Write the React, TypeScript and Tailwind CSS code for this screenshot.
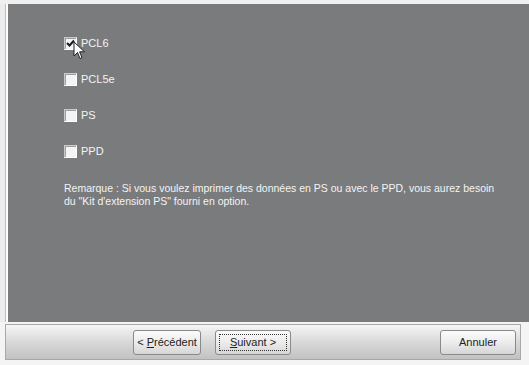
import React from "react";

function Checkbox({ checked }: { checked?: boolean }) {
  return (
    <div className="w-[13px] h-[13px] bg-[#f4f4f4] border border-t-[#c9c9c9] border-l-[#c9c9c9] border-b-white border-r-white shadow-[inset_1px_1px_0_#a0a0a0] flex items-center justify-center">
      {checked && (
        <svg width="9" height="9" viewBox="0 0 9 9">
          <path d="M1 4 L3.5 6.5 L8 1.5" stroke="#1a1a1a" strokeWidth="2" fill="none" />
        </svg>
      )}
    </div>
  );
}

function Option({ label, checked, cursor }: { label: string; checked?: boolean; cursor?: boolean }) {
  return (
    <div className="relative flex items-center gap-[4px] h-[14px]">
      <Checkbox checked={checked} />
      <span className="text-[11px] text-[#f4f4f4] leading-none">{label}</span>
      {cursor && (
        <svg className="absolute left-[9px] top-[5px]" width="13" height="20" viewBox="0 0 13 20">
          <path d="M1 1 L1 15 L4.5 11.5 L7 17.5 L9 16.6 L6.6 10.8 L11.5 10.8 Z" fill="#ffffff" stroke="#222" strokeWidth="1" strokeLinejoin="miter" />
        </svg>
      )}
    </div>
  );
}

function Btn({ children, focus, className = "" }: { children: React.ReactNode; focus?: boolean; className?: string }) {
  return (
    <div className={`h-[25px] rounded-[3px] border border-[#8a8a8a] bg-gradient-to-b from-[#fbfbfb] via-[#ececec] to-[#d6d6d6] flex items-center justify-center text-[11px] text-[#222] ${className}`}>
      {focus ? (
        <span className="border border-dotted border-[#333] px-[10px] py-[1px] leading-[13px]">{children}</span>
      ) : (
        <span className="leading-[13px]">{children}</span>
      )}
    </div>
  );
}

export default function App() {
  return (
    <div
      className="w-[529px] h-[365px] bg-[#ececec] flex flex-col overflow-hidden"
      style={{ fontFamily: '"Liberation Sans", Arial, sans-serif' }}
    >
      <div className="h-[4px] bg-[#f0f0f0]" />
      <div className="flex-1 flex pl-[5px]">
        <div className="w-[3px] bg-[#fdfdfd] border-l border-[#bdbdbd]" />
        <div className="flex-1 bg-[#7a7b7d] pt-[32px] pl-[56px]">
          <div className="flex flex-col gap-[22px]">
            <Option label="PCL6" checked cursor />
            <Option label="PCL5e" />
            <Option label="PS" />
            <Option label="PPD" />
          </div>
          <p className="mt-[24px] text-[10.5px] leading-[13px] text-[#f4f4f4] w-[440px]">
            Remarque : Si vous voulez imprimer des données en PS ou avec le PPD, vous aurez besoin du "Kit d'extension PS" fourni en option.
          </p>
        </div>
      </div>
      <div className="h-[43px] pl-[5px] pt-[2px] bg-[#f4f4f4]">
        <div className="h-[36px] w-[516px] border border-[#a8a8a8] bg-gradient-to-b from-[#f6f6f6] via-[#d8d8d8] to-[#c2c2c2] flex items-center pl-[127px] pr-[4px]">
          <Btn className="w-[68px]">
            &lt; <span className="underline">P</span>récédent
          </Btn>
          <Btn focus className="w-[76px] ml-[14px]">
            <span className="underline">S</span>uivant &gt;
          </Btn>
          <div className="flex-1" />
          <Btn className="w-[76px]">Annuler</Btn>
        </div>
      </div>
    </div>
  );
}
